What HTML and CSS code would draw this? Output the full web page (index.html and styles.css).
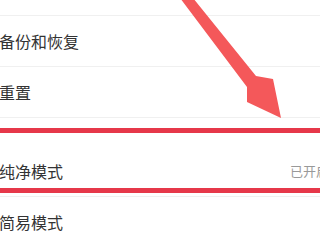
FILE: index.html
```html
<!DOCTYPE html>
<html lang="zh-CN">
<head>
    <meta charset="UTF-8">
    <meta name="viewport" content="width=device-width, initial-scale=1.0">
    <title>设置</title>
    <link rel="stylesheet" href="styles.css">
</head>
<body>
    <div class="screen">
        <div class="settings">
            <div class="row row-top"></div>
            <div class="row">
                <span class="row-title">备份和恢复</span>
            </div>
            <div class="row">
                <span class="row-title">重置</span>
            </div>
            <div class="section-gap"></div>
            <div class="row row-tall">
                <span class="row-title">纯净模式</span>
                <span class="row-value">已开启</span>
            </div>
            <div class="row">
                <span class="row-title">简易模式</span>
            </div>
        </div>

        <!-- annotation overlay -->
        <div class="highlight"></div>
        <svg class="arrow" width="320" height="240" viewBox="0 0 320 240">
            <polygon points="180,-2 193,-2 256,76 273,79 281,118 247,102 247,87" fill="#f4585a"/>
        </svg>
    </div>
</body>
</html>
```

FILE: styles.css
```css
* {
    margin: 0;
    padding: 0;
    box-sizing: border-box;
}

body {
    width: 320px;
    height: 240px;
    overflow: hidden;
    background: #fff;
    font-family: 'Noto Sans CJK SC', 'Noto Sans', sans-serif;
}

.screen {
    position: relative;
    width: 320px;
    height: 240px;
    overflow: hidden;
}

.settings {
    display: flex;
    flex-direction: column;
}

.row {
    display: flex;
    align-items: center;
    justify-content: space-between;
    height: 51px;
    border-bottom: 1px solid #f0f0f0;
    flex-shrink: 0;
}

.row-top {
    height: 16px;
}

.row-tall {
    height: 54px;
    padding-top: 2px;
}

.row-title {
    margin-left: -1px;
    font-size: 16px;
    color: #333;
}

.row-value {
    margin-right: -9px;
    font-size: 13px;
    color: #999;
}

.section-gap {
    height: 25px;
    flex-shrink: 0;
}

.highlight {
    position: absolute;
    left: -6px;
    top: 128px;
    width: 332px;
    height: 65px;
    border-top: 5px solid #e6384a;
    border-bottom: 5px solid #e6384a;
}

.arrow {
    position: absolute;
    left: 0;
    top: 0;
}
```
